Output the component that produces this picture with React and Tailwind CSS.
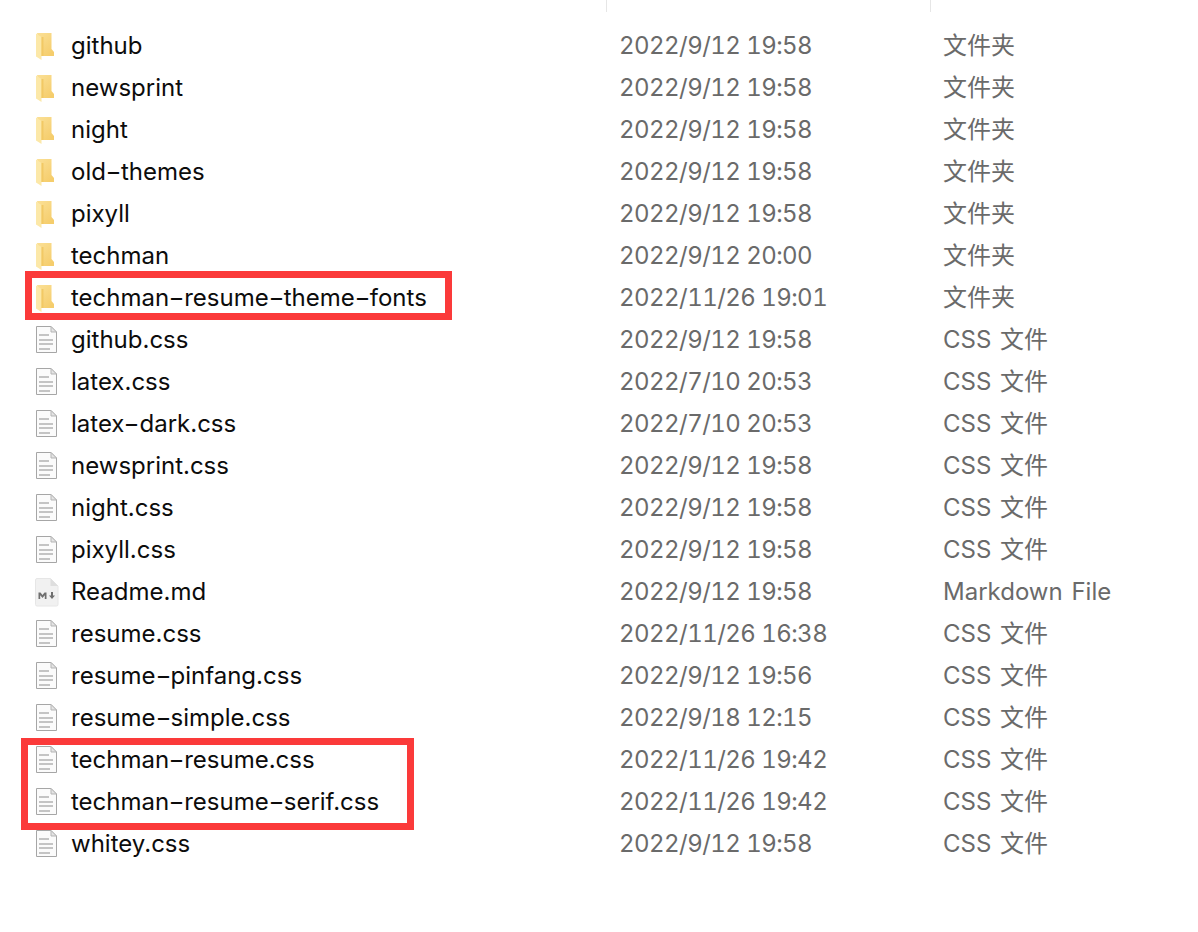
const rows = [
  { name: "github", date: "2022/9/12 19:58", type: "文件夹", icon: "folder" },
  { name: "newsprint", date: "2022/9/12 19:58", type: "文件夹", icon: "folder" },
  { name: "night", date: "2022/9/12 19:58", type: "文件夹", icon: "folder" },
  { name: "old-themes", date: "2022/9/12 19:58", type: "文件夹", icon: "folder" },
  { name: "pixyll", date: "2022/9/12 19:58", type: "文件夹", icon: "folder" },
  { name: "techman", date: "2022/9/12 20:00", type: "文件夹", icon: "folder" },
  { name: "techman-resume-theme-fonts", date: "2022/11/26 19:01", type: "文件夹", icon: "folder" },
  { name: "github.css", date: "2022/9/12 19:58", type: "CSS 文件", icon: "file" },
  { name: "latex.css", date: "2022/7/10 20:53", type: "CSS 文件", icon: "file" },
  { name: "latex-dark.css", date: "2022/7/10 20:53", type: "CSS 文件", icon: "file" },
  { name: "newsprint.css", date: "2022/9/12 19:58", type: "CSS 文件", icon: "file" },
  { name: "night.css", date: "2022/9/12 19:58", type: "CSS 文件", icon: "file" },
  { name: "pixyll.css", date: "2022/9/12 19:58", type: "CSS 文件", icon: "file" },
  { name: "Readme.md", date: "2022/9/12 19:58", type: "Markdown File", icon: "md" },
  { name: "resume.css", date: "2022/11/26 16:38", type: "CSS 文件", icon: "file" },
  { name: "resume-pinfang.css", date: "2022/9/12 19:56", type: "CSS 文件", icon: "file" },
  { name: "resume-simple.css", date: "2022/9/18 12:15", type: "CSS 文件", icon: "file" },
  { name: "techman-resume.css", date: "2022/11/26 19:42", type: "CSS 文件", icon: "file" },
  { name: "techman-resume-serif.css", date: "2022/11/26 19:42", type: "CSS 文件", icon: "file" },
  { name: "whitey.css", date: "2022/9/12 19:58", type: "CSS 文件", icon: "file" },
];

const FolderIcon = () => (
  <svg width="20" height="28" viewBox="0 0 20 28" className="ml-[36px] shrink-0">
    <defs>
      <linearGradient id="folderBack" x1="0" y1="0" x2="0.7" y2="1">
        <stop offset="0" stopColor="#fbe096" />
        <stop offset="1" stopColor="#f5cd6c" />
      </linearGradient>
    </defs>
    <path d="M1 1H15.5V17L18 20V24H5Z" fill="url(#folderBack)" />
    <path d="M0 1.5L5.5 5V28L0 24.5Z" fill="#fce8a8" />
    <path d="M5.5 5H7.5V24H5.5Z" fill="#f2c964" />
  </svg>
);

const FileIcon = () => (
  <svg width="22" height="28" viewBox="0 0 22 28" className="ml-[36px] shrink-0">
    <path d="M0.5 0.5H15L20.5 6V26.5H0.5Z" fill="#fbfbfb" stroke="#a6a6a6" />
    <path d="M15 0.5V6H20.5Z" fill="#e4e4e4" stroke="#b5b5b5" />
    <rect x="3" y="8" width="10" height="2" fill="#c4c4c4" />
    <rect x="3" y="13" width="14" height="2" fill="#c4c4c4" />
    <rect x="3" y="17" width="14" height="2" fill="#c4c4c4" />
    <rect x="3" y="22" width="11" height="2" fill="#c4c4c4" />
  </svg>
);

const MdIcon = () => (
  <svg width="24" height="29" viewBox="0 0 24 29" className="ml-[35px] -mr-[2px] shrink-0">
    <path d="M2 0.5H15.5L23 8V26.5Q23 28 21.5 28H2Q0.5 28 0.5 26.5V2Q0.5 0.5 2 0.5Z" fill="#f1f1f1" stroke="#e6e6e6" />
    <path d="M15.5 0.5V8H23Z" fill="#dedede" />
    <path d="M3.5 21V14.5H5.5L7.5 17L9.5 14.5H11.5V21H9.8V17.3L7.5 20L5.2 17.3V21Z" fill="#6f6f6f" />
    <path d="M16 14H18V17.5H20L17 21L14 17.5H16Z" fill="#6f6f6f" />
  </svg>
);

const icons = { folder: <FolderIcon />, file: <FileIcon />, md: <MdIcon /> };

// the hyphen in the screenshot's font is a lot longer than Inter's
const FileName = ({ name }) => (
  <span className="text-[#0c0c0c]">
    {name.split("-").map((part, i) => (
      <span key={i}>
        {i > 0 && <span className="inline-block w-[15px] scale-x-[1.45] text-center">-</span>}
        {part}
      </span>
    ))}
  </span>
);

export default function App() {
  return (
    <div
      className="relative min-h-[932px] w-[1198px] overflow-hidden bg-white"
      style={{ fontFamily: '"Inter", "Noto Sans CJK SC", sans-serif' }}
    >
      <div className="flex h-[25px] items-start">
        <div className="ml-[606px] h-3 w-px bg-[#e6e6e6]" />
        <div className="ml-[323px] h-3 w-px bg-[#e6e6e6]" />
      </div>

      {rows.map((row) => (
        <div key={row.name} className="flex h-[42px] items-center text-2xl">
          <div className="flex w-[619px] items-center">
            <div className="flex w-[71px] shrink-0 items-center">{icons[row.icon]}</div>
            <FileName name={row.name} />
          </div>
          <div className="w-[324px] tabular-nums tracking-[-0.55px] text-[#6a6a6a]">{row.date}</div>
          <div className="text-[#6a6a6a] [word-spacing:2px]">{row.type}</div>
        </div>
      ))}

      {/* red annotation boxes */}
      <div className="absolute left-[25px] top-[271px] h-[49px] w-[427px] border-[7px] border-[#fb3a3a]" />
      <div className="absolute left-[21px] top-[738px] h-[92px] w-[393px] border-[7px] border-[#fb3a3a]" />
    </div>
  );
}
